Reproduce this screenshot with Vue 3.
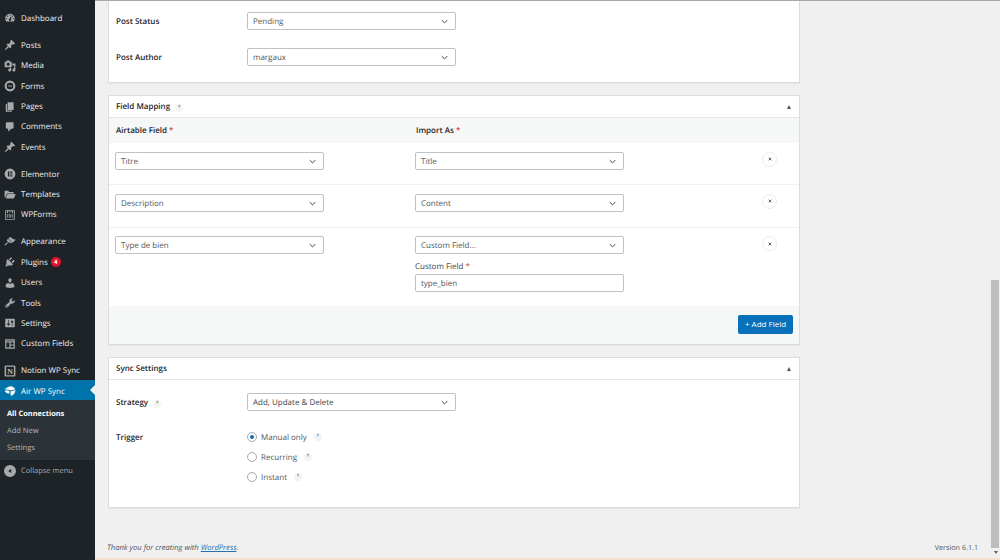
<script setup>
const ic = {
  dash: 'M3.76 16h12.48c1.1-1.37 1.76-3.11 1.76-5 0-4.42-3.58-8-8-8s-8 3.58-8 8c0 1.89.66 3.63 1.76 5zM10 4c.55 0 1 .45 1 1s-.45 1-1 1-1-.45-1-1 .45-1 1-1zM6 6c.55 0 1 .45 1 1s-.45 1-1 1-1-.45-1-1 .45-1 1-1zm8 0c.55 0 1 .45 1 1s-.45 1-1 1-1-.45-1-1 .45-1 1-1zm-5.37 5.55L12 7v6c0 1.1-.9 2-2 2s-2-.9-2-2c0-.57.24-1.08.63-1.45zM4 10c.55 0 1 .45 1 1s-.45 1-1 1-1-.45-1-1 .45-1 1-1zm12 0c.55 0 1 .45 1 1s-.45 1-1 1-1-.45-1-1 .45-1 1-1z',
  pin: 'M10.44 3.02l1.82-1.82 6.36 6.35-1.83 1.82c-1.05-.68-2.48-.57-3.41.36l-.75.75c-.92.93-1.04 2.35-.35 3.41l-1.83 1.82-2.41-2.41-2.8 2.79c-.42.42-3.38 2.71-3.8 2.29s1.86-3.39 2.28-3.81l2.79-2.79L4.1 9.36l1.83-1.82c1.05.69 2.48.57 3.4-.36l.75-.75c.93-.92 1.05-2.35.36-3.41z',
  media: 'M13 11V4c0-.55-.45-1-1-1h-1.67L9 1H5L3.67 3H2c-.55 0-1 .45-1 1v7c0 .55.45 1 1 1h10c.55 0 1-.45 1-1zM7 4.5c1.38 0 2.5 1.12 2.5 2.5S8.38 9.5 7 9.5 4.5 8.38 4.5 7 5.62 4.5 7 4.5zM14 6h5v10.5c0 1.38-1.12 2.5-2.5 2.5S14 17.88 14 16.5s1.12-2.5 2.5-2.5c.17 0 .34.02.5.05V9h-3V6zm-4 8.05V13h2v3.5c0 1.38-1.12 2.5-2.5 2.5S7 17.88 7 16.5 8.12 14 9.5 14c.17 0 .34.02.5.05z',
  forms: 'M10 1a9 9 0 1 0 0 18 9 9 0 0 0 0-18zM10 4.500a5.500 5.500 0 1 1 0 11 5.500 5.500 0 0 1 0-11zM7 9v2h6.500V9z',
  page: 'M6 15V2h10v13H6zm-1 1h8v2H3V5h2v11z',
  comment: 'M5 2h9c1.1 0 2 .9 2 2v7c0 1.1-.9 2-2 2h-2l-5 5v-5H5c-1.1 0-2-.9-2-2V4c0-1.1.9-2 2-2z',
  elementor: 'M10 1a9 9 0 1 0 0 18 9 9 0 0 0 0-18zM6.500 6H9v8H6.500zM10.500 6h3.500v2h-3.500zM10.500 9h3.500v2h-3.500zM10.500 12h3.500v2h-3.500z',
  templates: 'M1 3h6l1.500 2H16v2.500H5L2.500 14H1zM5.800 8.500H19.500L16.500 16H3z',
  wpforms: 'M2 2h16v16H2zM3.500 3.500v13h13v-13zM5 3.500h2v3H5zM13 3.500h2v3h-2zM9 3.500h2v2H9zM5.500 8.500h1.500v6H5.500zM9 8.500h2v6H9zM13 8.500h1.500v6H13z',
  brush: 'M14.48 11.06L7.41 3.99l1.5-1.5c.5-.56 2.3-.47 3.51.32 1.21.8 1.43 1.28 2.91 2.1 1.18.64 2.45 1.26 4.45.85zm-.71.71L6.7 4.7 4.93 6.47c-.39.39-.39 1.02 0 1.41l1.06 1.06c.39.39.39 1.03 0 1.42-.6.6-1.43 1.11-2.21 1.69-.35.26-.7.53-1.01.84C1.43 13.23.4 14.75 1.1 15.45c.7.7 2.22-.33 3.56-1.67.31-.31.58-.66.84-1.01.58-.78 1.09-1.61 1.69-2.21.39-.39 1.03-.39 1.42 0l1.06 1.06c.39.39 1.02.39 1.41 0z',
  plugin: 'M13.11 4.36L9.87 7.6 8 5.73l3.24-3.24c.35-.34 1.05-.2 1.56.32.52.51.66 1.21.31 1.55zm-8 1.77l.91-1.12 9.01 9.01-1.19.84c-.71.71-2.63 1.16-3.82 1.16H6.14L4.9 17.26c-.59.59-1.54.59-2.12 0-.59-.58-.59-1.53 0-2.12l1.24-1.24v-3.88c0-1.13.4-3.19 1.09-3.89zm7.26 3.97l3.24-3.24c.34-.35 1.04-.21 1.55.31.52.51.66 1.21.31 1.55l-3.24 3.25z',
  users: 'M10 9.25c-2.27 0-2.73-3.44-2.73-3.44C7 4.02 7.82 2 9.97 2c2.16 0 2.98 2.02 2.71 3.81 0 0-.41 3.44-2.68 3.44zm0 2.57L12.72 10c2.39 0 4.52 2.33 4.52 4.53v2.49s-3.65 1.13-7.24 1.13c-3.65 0-7.24-1.13-7.24-1.13v-2.49c0-2.25 1.94-4.48 4.47-4.48z',
  tools: 'M16.68 9.77c-1.34 1.34-3.3 1.67-4.95.99l-5.41 6.52c-.99.99-2.59.99-3.58 0s-.99-2.59 0-3.57l6.52-5.42c-.68-1.65-.35-3.61.99-4.95 1.28-1.28 3.12-1.62 4.72-1.06l-2.89 2.89 2.82 2.82 2.86-2.87c.53 1.58.18 3.39-1.08 4.65zM3.81 16.21c.4.39 1.04.39 1.43 0 .4-.4.4-1.04 0-1.43-.39-.4-1.03-.4-1.43 0-.39.39-.39 1.03 0 1.43z',
  settings: 'M18 16V4c0-.55-.45-1-1-1H3c-.55 0-1 .45-1 1v12c0 .55.45 1 1 1h14c.55 0 1-.45 1-1zM8 11h1c.55 0 1 .45 1 1s-.45 1-1 1H8v1.5c0 .28-.22.5-.5.5s-.5-.22-.5-.5V13H6c-.55 0-1-.45-1-1s.45-1 1-1h1V5.5c0-.28.22-.5.5-.5s.5.22.5.5V11zm5-2h-1c-.55 0-1-.45-1-1s.45-1 1-1h1V5.5c0-.28.22-.5.5-.5s.5.22.5.5V7h1c.55 0 1 .45 1 1s-.45 1-1 1h-1v5.5c0 .28-.22.5-.5.5s-.5-.22-.5-.5V9z',
  acf: 'M2 2h16v16H2zM4 4v1.500h12V4zM4 7.500V16h5V7.500zM11 7.500V11h5V7.500zM11 12.500V16h5v-3.500z',
  notion: 'M3 1h14a2 2 0 0 1 2 2v14a2 2 0 0 1-2 2H3a2 2 0 0 1-2-2V3a2 2 0 0 1 2-2zM3.500 3v14h13V3z',
  air: 'M1 8C4 4 8 2 11 2c3 0 6 2 8 5l-8 2C8 7 5 7 1 8zM1 10c3-1.500 6-1.500 8 0v4c-3 1-6-1-8-4zM11 11l8-2.500c0 3.500-2 7.500-6 9.500l-2-1z',
  collapse: 'M10 20a10 10 0 1 0 0-20 10 10 0 0 0 0 20zm2-13.500v7L7 10z'
}
const groups = [
  [{ t: 'Dashboard', i: ic.dash }],
  [
    { t: 'Posts', i: ic.pin }, { t: 'Media', i: ic.media }, { t: 'Forms', i: ic.forms },
    { t: 'Pages', i: ic.page }, { t: 'Comments', i: ic.comment }, { t: 'Events', i: ic.pin }
  ],
  [{ t: 'Elementor', i: ic.elementor }, { t: 'Templates', i: ic.templates }, { t: 'WPForms', i: ic.wpforms }],
  [
    { t: 'Appearance', i: ic.brush }, { t: 'Plugins', i: ic.plugin, badge: '4' }, { t: 'Users', i: ic.users },
    { t: 'Tools', i: ic.tools }, { t: 'Settings', i: ic.settings }, { t: 'Custom Fields', i: ic.acf }
  ]
]
const mappings = [
  { a: 'Titre', b: 'Title' },
  { a: 'Description', b: 'Content' },
  { a: 'Type de bien', b: 'Custom Field...', custom: 'type_bien' }
]
const triggers = [
  { t: 'Manual only', on: true },
  { t: 'Recurring', on: false },
  { t: 'Instant', on: false }
]
</script>

<template>
  <div class="app">
    <aside class="sidebar">
      <ul v-for="(g, gi) in groups" :key="gi" class="group">
        <li v-for="m in g" :key="m.t" class="item">
          <svg class="icon" viewBox="0 0 20 20"><path :d="m.i" fill-rule="evenodd" /></svg>
          <span>{{ m.t }}</span>
          <b v-if="m.badge" class="badge">{{ m.badge }}</b>
        </li>
      </ul>
      <ul class="group tight">
        <li class="item">
          <svg class="icon" viewBox="0 0 20 20"><path :d="ic.notion" fill-rule="evenodd" /><text x="5.500" y="15" class="notion-n">N</text></svg>
          <span>Notion WP Sync</span>
        </li>
        <li class="item current">
          <svg class="icon" viewBox="0 0 20 20"><path :d="ic.air" /></svg>
          <span>Air WP Sync</span>
        </li>
      </ul>
      <ul class="submenu">
        <li class="active">All Connections</li>
        <li>Add New</li>
        <li>Settings</li>
      </ul>
      <div class="item collapse">
        <svg class="icon" viewBox="0 0 20 20"><path :d="ic.collapse" fill-rule="evenodd" /></svg>
        <span>Collapse menu</span>
      </div>
    </aside>

    <main class="main">
      <div class="work">
        <div class="content">
          <section class="card first">
            <div class="row">
              <label class="lbl">Post Status</label>
              <div class="select"><span>Pending</span><svg class="chev" viewBox="0 0 10 6"><path d="M1 1l4 4 4-4" /></svg></div>
            </div>
            <div class="row">
              <label class="lbl">Post Author</label>
              <div class="select"><span>margaux</span><svg class="chev" viewBox="0 0 10 6"><path d="M1 1l4 4 4-4" /></svg></div>
            </div>
          </section>

          <section class="card mapping">
            <header class="head">
              <h2>Field Mapping <i class="help">?</i></h2>
              <span class="tri"></span>
            </header>
            <div class="thead">
              <div class="lbl">Airtable Field <em>*</em></div>
              <div class="lbl">Import As <em>*</em></div>
            </div>
            <div v-for="m in mappings" :key="m.a" class="frow">
              <div class="select"><span>{{ m.a }}</span><svg class="chev" viewBox="0 0 10 6"><path d="M1 1l4 4 4-4" /></svg></div>
              <div class="col2">
                <div class="select"><span>{{ m.b }}</span><svg class="chev" viewBox="0 0 10 6"><path d="M1 1l4 4 4-4" /></svg></div>
                <template v-if="m.custom">
                  <div class="sublbl">Custom Field <em>*</em></div>
                  <div class="select input"><span>{{ m.custom }}</span></div>
                </template>
              </div>
              <button class="remove"><svg viewBox="0 0 6 6"><path d="M1 1l4 4M5 1L1 5" /></svg></button>
            </div>
            <footer class="foot">
              <button class="primary">+ Add Field</button>
            </footer>
          </section>

          <section class="card sync">
            <header class="head">
              <h2>Sync Settings</h2>
              <span class="tri"></span>
            </header>
            <div class="row strategy">
              <label class="lbl">Strategy <i class="help">?</i></label>
              <div class="select dark"><span>Add, Update &amp; Delete</span><svg class="chev" viewBox="0 0 10 6"><path d="M1 1l4 4 4-4" /></svg></div>
            </div>
            <div class="row trigger">
              <label class="lbl">Trigger</label>
              <div class="radios">
                <div v-for="r in triggers" :key="r.t" class="radio">
                  <span class="dot" :class="{ on: r.on }"></span>
                  <span>{{ r.t }}</span>
                  <i class="help">?</i>
                </div>
              </div>
            </div>
          </section>

          <footer class="page-foot">
            <span class="thanks">Thank you for creating with <a>WordPress</a>.</span>
            <span class="version">Version 6.1.1</span>
          </footer>
        </div>
        <div class="scrollbar">
          <div class="thumb"></div>
          <span class="down"></span>
        </div>
      </div>
      <div class="strip"></div>
    </main>
  </div>
</template>

<style scoped>
.app {
  display: flex;
  width: 1000px;
  height: 560px;
  overflow: hidden;
  font-family: "Open Sans", "Noto Sans", sans-serif;
  font-size: 8px;
  color: #1d2327;
  background: #f0f0f1;
  text-rendering: geometricPrecision;
}
ul { list-style: none; margin: 0; padding: 0; }

.sidebar {
  width: 95px;
  flex: none;
  background: #1d2327;
  color: #f0f0f1;
  padding-top: 7px;
  box-sizing: border-box;
}
.group { margin-bottom: 6.5px; }
.group.tight { margin-bottom: 0; }
.item {
  position: relative;
  box-sizing: border-box;
  height: 20.4px;
  display: flex;
  align-items: center;
  gap: 5px;
  padding: 2.5px 0 0 4px;
  white-space: nowrap;
}
.icon { width: 12px; height: 12px; fill: #a7aaad; flex: none; }
.notion-n { font-family: "Liberation Serif", serif; font-size: 13px; font-weight: 700; fill: #c3c4c7; }
.badge {
  width: 10px;
  height: 10px;
  border-radius: 50%;
  background: #e2142d;
  color: #fff;
  font-size: 6px;
  line-height: 10px;
  text-align: center;
  margin-left: -2px;
}
.current { background: #0073aa; color: #fff; }
.current .icon { fill: #fff; }
.current::after {
  content: "";
  position: absolute;
  right: 0;
  top: 5px;
  border: 5px solid transparent;
  border-left: 0;
  border-right-color: #f0f0f1;
}
.submenu {
  background: #2c3338;
  padding: 5.5px 0 3px 7px;
  color: #b9bcbf;
  font-size: 7.5px;
}
.submenu li { height: 17px; line-height: 17px; }
.submenu .active { color: #fff; font-weight: 700; font-size: 7.4px; }
.collapse { color: #a7aaad; height: 20px; font-size: 7.5px; padding-top: 2px; }

.main {
  flex: 1;
  display: flex;
  flex-direction: column;
  min-width: 0;
  border-top: 1px solid #a8a8a8;
}
.work { flex: 1; display: flex; min-height: 0; }
.content {
  flex: 1;
  display: flex;
  flex-direction: column;
  padding: 0 13px;
  min-width: 0;
}
.strip { height: 2px; background: #f6dfcc; }

.card {
  width: 692px;
  box-sizing: border-box;
  background: #fff;
  border: 1px solid #dcdcde;
  box-shadow: 0 1px 1px rgba(0, 0, 0, .04);
}
.card.first { height: 82px; border-top: 0; padding-top: 11px; }
.card.mapping { margin-top: 12px; height: 250px; display: flex; flex-direction: column; }
.card.sync { margin-top: 12px; height: 151px; }

.row { display: flex; align-items: center; margin-bottom: 18px; }
.lbl { font-weight: 600; color: #1d2327; display: block; }
.row > .lbl { width: 138px; padding: 1px 0 0 7px; box-sizing: border-box; flex: none; }
em { color: #d63638; font-style: normal; }

.select {
  width: 209px;
  height: 18px;
  box-sizing: border-box;
  border: 1px solid #bfc1c4;
  border-radius: 2px;
  padding: 1px 7px 0 5px;
  display: flex;
  align-items: center;
  justify-content: space-between;
  background: #fff;
  color: #50575e;
  flex: none;
}
.select.dark { color: #3c434a; padding-top: 0; }
.select.input { margin-bottom: -1px; padding-top: 0; }
.chev { width: 7px; height: 5px; fill: none; stroke: #2c3338; stroke-width: 1.300; }

.head {
  box-sizing: border-box;
  height: 22px;
  display: flex;
  align-items: center;
  justify-content: space-between;
  padding: 0 7px;
  border-bottom: 1px solid #e4e5e7;
  flex: none;
}
h2 { margin: 0; font-size: 8px; font-weight: 600; color: #1d2327; }
.tri {
  width: 0;
  height: 0;
  border: 2.500px solid transparent;
  border-top: 0;
  border-bottom: 4px solid #50575e;
  margin-right: 1px;
}
.help {
  display: inline-block;
  width: 8px;
  height: 8px;
  border-radius: 50%;
  background: #f4f4f5;
  color: #50575e;
  font-size: 4px;
  font-style: normal;
  font-weight: 700;
  line-height: 8px;
  text-align: center;
  margin-left: 3px;
  vertical-align: 1px;
}
.thead {
  display: grid;
  grid-template-columns: 300px 1fr;
  align-items: center;
  height: 25px;
  padding: 0 0 0 7px;
  box-sizing: border-box;
  background: #f6f7f7;
  flex: none;
}
.frow {
  display: grid;
  grid-template-columns: 300px 347px 1fr;
  padding: 8.5px 0 14.75px 6px;
  border-bottom: 1px solid #f0f0f1;
  flex: none;
}
.sublbl { margin: 7.5px 0 3.5px; color: #3c434a; height: 9px; line-height: 9px; }
.remove {
  width: 15px;
  height: 15px;
  padding: 0;
  background: #fff;
  border: 1px solid #ececee;
  border-radius: 50%;
  display: flex;
  align-items: center;
  justify-content: center;
}
.remove svg { width: 4px; height: 4px; fill: none; stroke: #3c434a; stroke-width: 1.200; }
.foot {
  flex: 1;
  background: #f6f7f7;
  display: flex;
  justify-content: flex-end;
  align-items: center;
  padding-right: 6px;
  margin-top: -1px;
}
.primary {
  width: 55px;
  height: 19px;
  background: #0871b9;
  color: #fff;
  border: 0;
  border-radius: 2px;
  font: inherit;
  padding: 0 0 2px;
}
.strategy { margin: 13px 0 0; }
.trigger { margin: 22px 0 0; align-items: flex-start; }
.row.trigger > .lbl { margin-top: -2px; }
.radios { display: flex; flex-direction: column; gap: 10px; margin-top: -1px; }
.radio { display: flex; align-items: center; height: 10px; color: #50575e; }
.radio .help { margin-left: 7px; }
.dot {
  width: 10px;
  height: 10px;
  box-sizing: border-box;
  border: 1px solid #a4a6aa;
  border-radius: 50%;
  margin-right: 4px;
  background: #fff;
  display: flex;
  align-items: center;
  justify-content: center;
}
.dot.on::before { content: ""; width: 4px; height: 4px; border-radius: 50%; background: #0a6fb8; }

.page-foot {
  margin-top: auto;
  margin-bottom: 5px;
  display: flex;
  justify-content: space-between;
  align-items: center;
  color: #50575e;
  font-size: 7.6px;
}
.thanks { font-style: italic; margin-left: -1px; }
.thanks a { color: #2271b1; text-decoration: underline; }
.version { font-size: 7.2px; }

.scrollbar {
  width: 9px;
  flex: none;
  background: #f0f0f0;
  display: flex;
  flex-direction: column;
  align-items: center;
}
.thumb { width: 8px; align-self: flex-start; height: 268px; margin-top: 279px; background: #bdbdbd; }
.down {
  margin-top: 3px;
  width: 0;
  height: 0;
  border: 2px solid transparent;
  border-bottom: 0;
  border-top: 3px solid #606060;
}
</style>
